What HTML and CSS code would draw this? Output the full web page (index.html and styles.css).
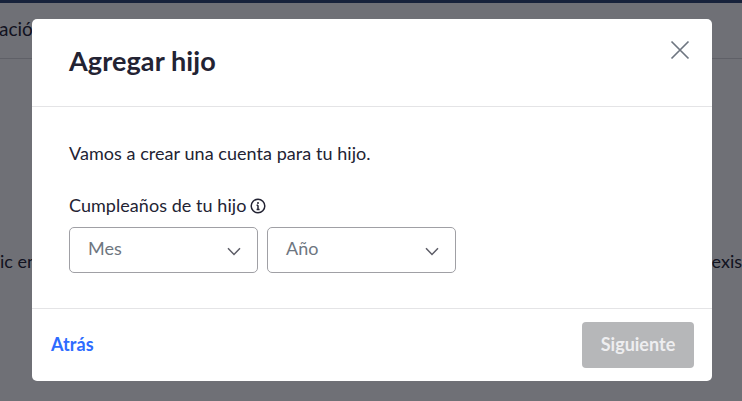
FILE: index.html
```html
<!DOCTYPE html>
<html lang="es">
<head>
<meta charset="utf-8">
<title>Agregar hijo</title>
<link rel="stylesheet" href="styles.css">
</head>
<body>
<div class="page">
  <div class="topbar"></div>
  <div class="tabs"><span class="tab-label">ació</span></div>
  <div class="behind-row"><span>ic en</span><span class="behind-right">exis</span></div>
</div>
<div class="backdrop"></div>
<div class="modal" role="dialog">
  <header class="modal-head">
    <h1 class="modal-title">Agregar hijo</h1>
    <button class="close" aria-label="Cerrar">
      <svg width="20" height="20" viewBox="0 0 20 20" class="close-icon"><path d="M1.5 1.5L18.5 18.5M18.5 1.5L1.5 18.5"/></svg>
    </button>
  </header>
  <section class="modal-body">
    <p class="intro">Vamos a crear una cuenta para tu hijo.</p>
    <div class="label-row">
      <span class="label">Cumpleaños de tu hijo</span>
      <svg class="info" width="16" height="16" viewBox="0 0 16 16"><circle cx="8" cy="8" r="6.8"/><path d="M8 7.2V11.4M6.6 7.3H8M6.6 11.4H9.6"/><circle class="dot" cx="8" cy="4.9" r="1"/></svg>
    </div>
    <div class="selects">
      <div class="select select-month"><span>Mes</span><svg width="14" height="9" viewBox="0 0 14 9" class="chev"><path d="M1 1.2L7 7.4L13 1.2"/></svg></div>
      <div class="select select-year"><span>Año</span><svg width="14" height="9" viewBox="0 0 14 9" class="chev"><path d="M1 1.2L7 7.4L13 1.2"/></svg></div>
    </div>
  </section>
  <footer class="modal-foot">
    <a class="back" href="#">Atrás</a>
    <button class="next" disabled>Siguiente</button>
  </footer>
</div>
</body>
</html>
```
FILE: styles.css
```css
* { box-sizing: border-box; }
html, body { margin: 0; height: 100%; overflow: hidden; }
body { font-family: Lato, "Open Sans", sans-serif; color: #232333; background: #fff; }

.page { height: 401px; overflow: hidden; }
.topbar { height: 3px; background: #2f4674; }
.tabs { height: 56px; border-bottom: 1px solid #d9d9dc; display: flex; align-items: center; }
.tab-label { font-size: 19px; margin-left: -1px; margin-top: -5px; color: #232333; }
.behind-row { display: flex; justify-content: space-between; margin-top: 191px; font-size: 18px; line-height: 22px; white-space: nowrap; overflow: hidden; }
.behind-right { margin-right: 0; }

.backdrop { position: fixed; inset: 0; background: rgba(7, 9, 19, 0.58); }

.modal { position: fixed; left: 32px; top: 19px; width: 680px; height: 362px; background: #fff; border-radius: 5px; display: flex; flex-direction: column; }

.modal-head { height: 88px; flex: none; border-bottom: 1px solid #e4e4e6; padding: 0 22px 0 37px; display: flex; align-items: center; justify-content: space-between; }
.modal-title { margin: 0; font-size: 27px; font-weight: 700; line-height: 32px; letter-spacing: 0.1px; color: #232333; position: relative; top: -2px; }
.close { background: none; border: 0; padding: 0; width: 20px; height: 20px; position: relative; top: -13px; }
.close-icon { display: block; fill: none; stroke: #6e7680; stroke-width: 1.7; }

.modal-body { flex: 1; padding: 35px 37px 0; }
.intro { margin: 0; font-size: 18px; line-height: 22px; letter-spacing: 0.05px; }
.label-row { display: flex; align-items: center; gap: 4px; margin-top: 30px; height: 22px; }
.label { font-size: 18px; line-height: 22px; letter-spacing: 0.05px; }
.info { fill: none; stroke: #232333; stroke-width: 1.5; position: relative; top: 1px; }
.info .dot { fill: #232333; stroke: none; }

.selects { display: flex; gap: 9px; margin-top: 11px; }
.select { width: 189px; height: 46px; border: 1px solid #a0a0a5; border-radius: 5px; display: flex; align-items: center; justify-content: space-between; padding: 0 16px 4px 18px; font-size: 18px; color: #6e7680; background: #fff; }
.chev { fill: none; stroke: #5c5c66; stroke-width: 1.5; margin-top: 6px; }

.modal-foot { height: 73px; flex: none; border-top: 1px solid #e4e4e6; display: flex; align-items: center; justify-content: space-between; padding: 0 18px 0 19px; }
.back { font-size: 18px; font-weight: 700; color: #2d6bff; text-decoration: none; position: relative; top: -1px; letter-spacing: 0.1px; }
.next { width: 112px; height: 46px; border: 0; border-radius: 4px; padding: 0 0 2px; background: #b6b7b9; color: #eeeef0; font: 700 18px Lato, "Open Sans", sans-serif; }
```
